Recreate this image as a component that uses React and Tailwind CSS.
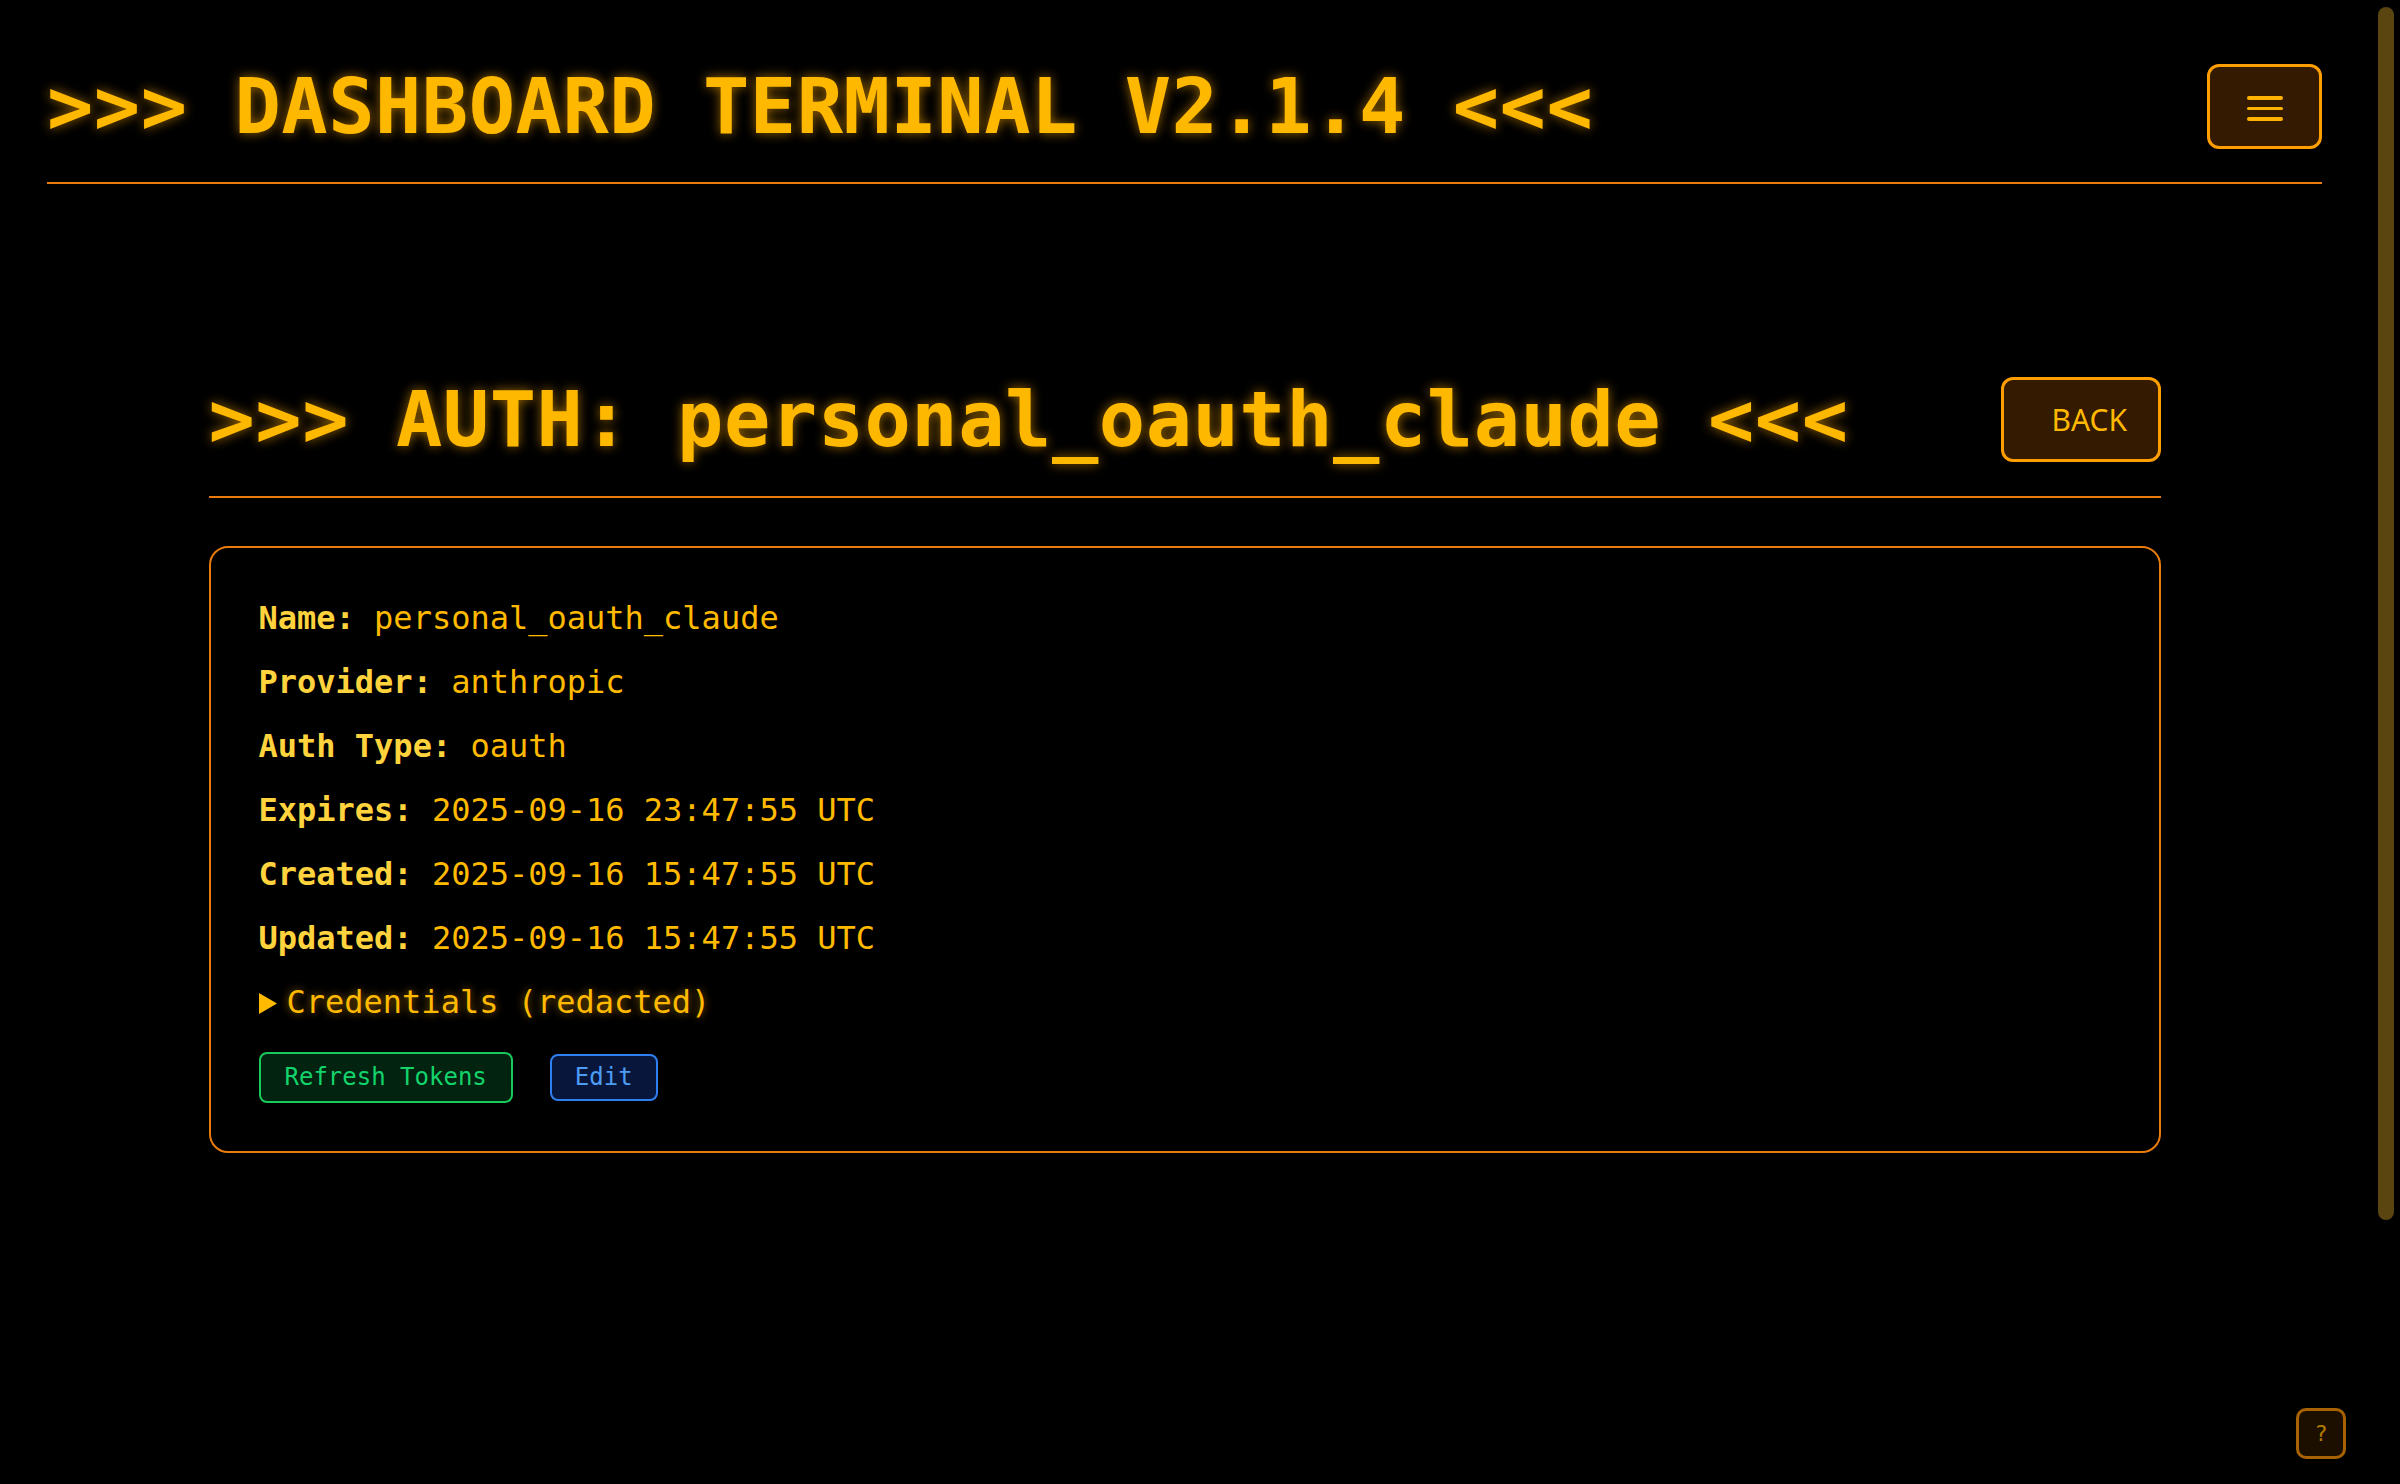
import React from "react";

const mono = "font-['DejaVu_Sans_Mono',monospace]";

function Row({ label, value }) {
  return (
    <div className="leading-[44.8px] text-[32px]">
      <span className="font-bold text-[#ffd33d]">{label}</span>{" "}
      <span className="text-[#ffba00]">{value}</span>
    </div>
  );
}

export default function App() {
  return (
    <div className={`relative flex h-screen bg-black ${mono}`}>
      <div className="flex-1 h-full overflow-y-auto [scrollbar-width:none]">
        {/* Header */}
        <header className="px-[47px] pt-[64px]">
          <div className="flex items-center justify-between pb-[33px] border-b-2 border-[#e87b0c]">
            <h1 className="text-[77px] leading-none font-bold tracking-[0.5px] text-[#ffb800] [text-shadow:0_0_12px_rgba(255,170,0,0.6)]">
              &gt;&gt;&gt; DASHBOARD TERMINAL V2.1.4 &lt;&lt;&lt;
            </h1>
            <button className="w-[115px] h-[85px] rounded-[12px] border-[3px] border-[#ff9e00] bg-[#331a00] flex flex-col items-center justify-center gap-[7px] pt-[4px]">
              <span className="block w-[36px] h-[3.5px] rounded-full bg-[#ffb300]" />
              <span className="block w-[36px] h-[3.5px] rounded-full bg-[#ffb300]" />
              <span className="block w-[36px] h-[3.5px] rounded-full bg-[#ffb300]" />
            </button>
          </div>
        </header>

        {/* Main */}
        <main className="w-[1952px] mx-auto pt-[193px] pb-[642px]">
          <div className="flex items-center justify-between pb-[34px] border-b-2 border-[#e87b0c]">
            <h2 className="text-[77px] leading-none font-bold tracking-[0.5px] text-[#ffb800] [text-shadow:0_0_12px_rgba(255,170,0,0.6)]">
              &gt;&gt;&gt; AUTH: personal_oauth_claude &lt;&lt;&lt;
            </h2>
            <button className="h-[85px] w-[160px] pl-[48px] pr-[30px] text-left rounded-[12px] border-[3px] border-[#ff9e00] bg-[#331a00] text-[#ffb800] text-[30px] font-['Noto_Sans',sans-serif]">
              BACK
            </button>
          </div>

          <section className="mt-[48px] rounded-[19px] border-2 border-[#e87b0c] pl-[48px] pr-[47px] pt-[48px] pb-[48px]">
            <div className="flex flex-col gap-[19.2px]">
              <Row label="Name:" value="personal_oauth_claude" />
              <Row label="Provider:" value="anthropic" />
              <Row label="Auth Type:" value="oauth" />
              <Row label="Expires:" value="2025-09-16 23:47:55 UTC" />
              <Row label="Created:" value="2025-09-16 15:47:55 UTC" />
              <Row label="Updated:" value="2025-09-16 15:47:55 UTC" />
              <div className="flex items-center gap-[10px] leading-[44.8px] text-[32px] text-[#ffba00]">
                <svg width="18" height="21" viewBox="0 0 18 21" className="shrink-0 mt-[2px]">
                  <polygon points="0,0 18,10.5 0,21" fill="#ffba00" />
                </svg>
                <span className="[text-shadow:0_0_8px_rgba(255,170,0,0.6)]">Credentials (redacted)</span>
              </div>
            </div>
            <div className="mt-[27px] flex items-center gap-[37px]">
              <button className="px-[24px] py-[10px] leading-[27px] text-[24px] rounded-[8px] border-2 border-[#18c95c] bg-[#012310] text-[#13d46b]">
                Refresh Tokens
              </button>
              <button className="px-[23px] py-[8px] leading-[27px] text-[24px] rounded-[8px] border-2 border-[#2f7ff0] bg-[#07163a] text-[#4d9cf5]">
                Edit
              </button>
            </div>
          </section>
        </main>
      </div>

      {/* Scrollbar track */}
      <div className="w-[31px] h-full shrink-0 bg-black pt-[7px] pl-[9px]">
        <div className="w-[16px] h-[1213px] rounded-full bg-[#5a4510]" />
      </div>

      <button className="absolute right-[54px] bottom-[25px] w-[50px] h-[51px] rounded-[10px] border-[3px] border-[#a86300] bg-[#1c0f00] text-[#b07a00] text-[22px] leading-none flex items-center justify-center">
        ?
      </button>
    </div>
  );
}
